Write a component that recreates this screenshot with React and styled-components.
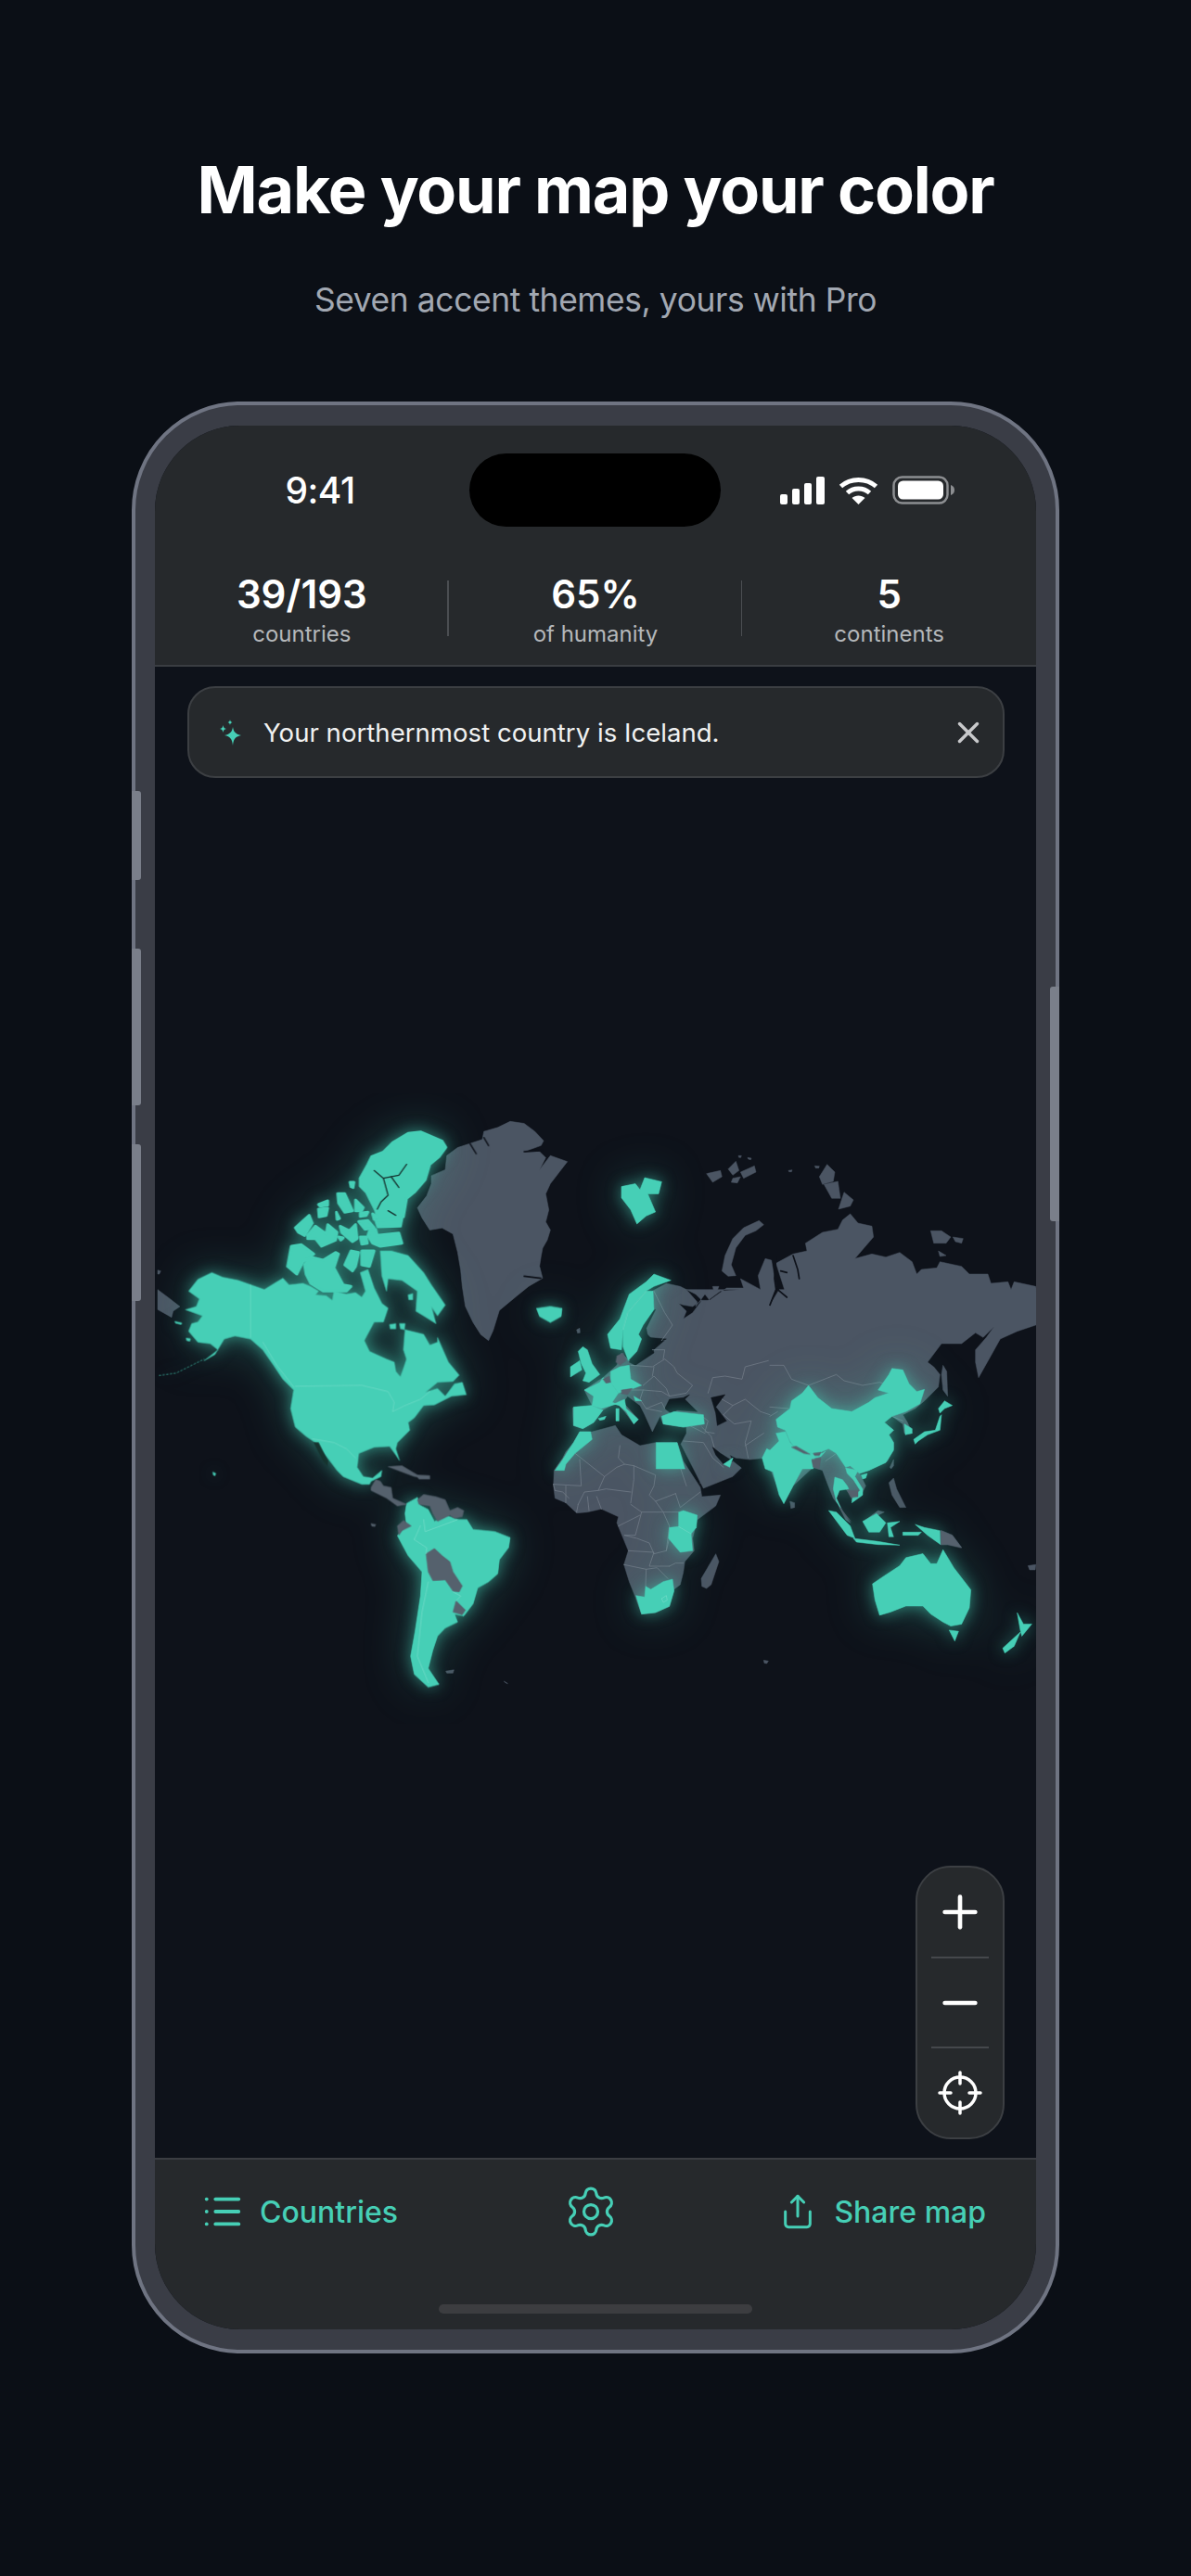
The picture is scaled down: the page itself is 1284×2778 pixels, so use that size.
import React from "react";
import styled, { createGlobalStyle } from "styled-components";
import { List, Settings, Share, Plus, Minus, X } from "lucide-react";

const TEAL = "#46cfb6";
const LAND = "#4b5563";
const WATER = "#0e121a";
const FJORD = "#16332f";
const BORDER = "#717a87";

const GlobalStyle = createGlobalStyle`
  html, body { margin: 0; padding: 0; background: #0b0f16; }
  body { font-family: "Inter", "Liberation Sans", sans-serif; }
`;

const Page = styled.div`
  width: 1284px;
  height: 2778px;
  overflow: hidden;
  background: #0b0f16;
  padding-top: 163px;
  box-sizing: border-box;
  display: flex;
  flex-direction: column;
  align-items: center;
`;

const Title = styled.h1`
  margin: 0;
  font-size: 70px;
  line-height: 84px;
  font-weight: 700;
  letter-spacing: -1.2px;
  color: #ffffff;
`;

const Subtitle = styled.p`
  margin: 55px 0 0;
  font-size: 35.4px;
  line-height: 44px;
  font-weight: 400;
  letter-spacing: -0.4px;
  color: #a2a8b2;
`;

const Phone = styled.div`
  position: relative;
  margin-top: 87px;
  width: 1000px;
  height: 2105px;
  box-sizing: border-box;
  padding: 22px 21px;
  background: #3a3d46;
  border: 4px solid #6f7482;
  border-radius: 117px;
  flex-shrink: 0;
`;

const SideButton = styled.div`
  position: absolute;
  top: ${(p) => p.$top}px;
  height: ${(p) => p.$height}px;
  width: 10px;
  background: #7a7f8a;
  ${(p) => (p.$right ? "right: -4px; border-radius: 3px 0 0 3px;" : "left: -4px; border-radius: 0 3px 3px 0;")}
`;

const Screen = styled.div`
  height: 100%;
  border-radius: 92px;
  overflow: hidden;
  background: ${WATER};
  display: flex;
  flex-direction: column;
`;

const Header = styled.header`
  background: #26292c;
  border-bottom: 2px solid #3a3d42;
  flex-shrink: 0;
`;

const StatusBar = styled.div`
  display: grid;
  grid-template-columns: 339px 271px 1fr;
  padding-top: 30px;
`;

const Time = styled.div`
  padding-left: 17px;
  text-align: center;
  font-size: 39px;
  font-weight: 500;
  line-height: 79px;
  letter-spacing: -0.5px;
  color: #fff;
`;

const Island = styled.div`
  height: 79px;
  background: #000;
  border-radius: 40px;
`;

const StatusIcons = styled.div`
  display: flex;
  align-items: center;
  gap: 15px;
  padding-left: 64px;
`;

const Stats = styled.div`
  display: grid;
  grid-template-columns: repeat(3, 1fr);
  margin-top: 58px;
  padding-bottom: 19px;
`;

const Stat = styled.div`
  position: relative;
  display: flex;
  flex-direction: column;
  align-items: center;
  &:not(:last-child)::after {
    content: "";
    position: absolute;
    right: 0;
    top: 0;
    height: 60px;
    width: 1.5px;
    background: #4b4e52;
  }
`;

const StatValue = styled.div`
  font-size: 42px;
  line-height: 30px;
  font-weight: 600;
  color: #fff;
`;

const StatLabel = styled.div`
  margin-top: 14px;
  font-size: 24px;
  line-height: 28px;
  color: #b4b7ba;
`;

const MapArea = styled.main`
  position: relative;
  flex: 1;
  min-height: 0;
  padding-top: 21px;
`;

const Notice = styled.div`
  height: 99px;
  margin: 0 34px 0 35px;
  box-sizing: border-box;
  padding: 0 18px 0 33px;
  display: flex;
  align-items: center;
  gap: 23px;
  background: #26292c;
  border: 2px solid #3c3f43;
  border-radius: 30px;
`;

const NoticeText = styled.span`
  flex: 1;
  font-size: 27.6px;
  color: #f0f1f1;
`;

const WorldMap = styled.svg`
  display: block;
  width: 950px;
  height: 680px;
  margin-top: 340px;
`;

const GlowGroup = styled.g`
  filter: drop-shadow(0 0 8px rgba(70, 207, 182, 0.55)) drop-shadow(0 0 24px rgba(70, 207, 182, 0.28));
`;

const ZoomPanel = styled.div`
  position: absolute;
  right: 34px;
  bottom: 20px;
  width: 96px;
  height: 295px;
  box-sizing: border-box;
  display: flex;
  flex-direction: column;
  background: #26292c;
  border: 2px solid #3c3f43;
  border-radius: 38px;
`;

const ZoomButton = styled.div`
  flex: 1;
  display: flex;
  align-items: center;
  justify-content: center;
  color: #fff;
`;

const ZoomRule = styled.div`
  height: 2px;
  margin: 0 15px;
  background: #45484c;
`;

const BottomBar = styled.footer`
  flex-shrink: 0;
  height: 185px;
  box-sizing: border-box;
  background: #26292c;
  border-top: 2px solid #3a3d42;
  display: flex;
  flex-direction: column;
  align-items: center;
`;

const BarRow = styled.div`
  align-self: stretch;
  height: 112px;
  padding: 0 54px 0 56px;
  display: flex;
  align-items: center;
  justify-content: space-between;
  color: ${TEAL};
`;

const BarItem = styled.div`
  display: flex;
  align-items: center;
  gap: ${(p) => p.$gap}px;
  font-size: 32px;
  font-weight: 500;
`;

const HomeBar = styled.div`
  margin-top: 44px;
  width: 338px;
  height: 10px;
  border-radius: 5px;
  background: #3c3d40;
`;

/* Map outlines. Each block below is traced from one crop of the design, so the
   numbers are crop pixels; Crop puts them back on the map. */

// origin 170,1360 - north america mainland
const naTeal = [
  "100,100 130,62 175,40 210,55 260,65 302,80 345,95 385,70 405,58 425,80 470,75 495,85 520,100 510,112 545,115 565,130 570,100 610,110 640,105 660,120 672,100 655,40 680,30 700,90 725,140 745,155 730,200 700,200 668,260 685,295 740,320 765,330 770,360 785,378 795,350 805,320 795,290 800,225 860,240 880,275 905,265 905,250 940,330 975,372 955,392 905,395 865,428 905,415 930,440 960,400 985,395 998,435 950,440 895,468 860,470 830,510 810,525 815,550 775,590 770,610 782,648 770,630 750,602 700,605 650,625 645,670 665,700 695,705 725,680 722,700 690,715 685,725 660,725 600,700 580,680 550,640 510,590 480,570 445,540 430,480 440,420 405,385 375,340 340,290 300,255 250,245 215,255 185,305 150,325 195,290 170,270 130,265 100,230 110,205 130,200 145,180 90,160 125,150 135,125",
  "720,-30 755,-30 810,-15 860,40 885,80 930,145 905,180 885,150 900,205 860,180 835,165 840,100 790,65 745,60 740,100 725,50",
  "92,252 106,254 104,262 94,260",
  "55,198 78,203 76,208 58,204",
  "750,208 770,205 770,222 752,222",
  "782,205 800,205 798,225 785,222",
  "810,112 825,108 825,128 812,128",
  "178,685 188,690 185,698 180,695",
];
const naGray = [
  "0,95 40,125 72,150 50,165 45,185 0,160",
  "0,32 10,35 5,45 0,45",
];
const naGrayOver = [
  "690,735 705,710 720,715 730,730 755,735 760,770 805,790 775,795 740,770 690,745",
  "745,668 790,665 840,695 870,705 830,700 790,685",
  "835,695 880,697 880,708 845,708",
  "840,775 860,758 900,765 930,775 945,810 970,800 990,810 985,830 960,835 945,825 905,845 890,820 880,795 845,790",
  "775,860 795,842 820,860 790,875 780,890",
  "690,852 705,855 702,862 692,860",
];
const naDark = ["505,590 520,590 550,650 548,665 535,650"];
const naTealLines = [
  "300,80 300,250",
  "445,408 660,405 745,425 765,460 760,490 800,470 850,450 880,425",
  "500,578 570,590 610,610 640,640",
  "340,265 385,340 440,410",
];
const naThin = ["5,373 60,365 110,340 150,320"];

// origin 290,1210 - canadian arctic
const arcticTeal = [
  "295,185 320,140 332,115 370,100 400,70 450,40 490,35 560,65 572,85 550,115 520,140 505,190 470,230 445,250 435,310 355,320 345,290 315,230 295,210",
  "345,322 430,315 425,340 352,342",
  "325,355 345,350 350,370 420,362 430,395 360,405 335,395 320,370",
  "290,325 320,322 340,345 310,350",
  "222,235 245,235 270,290 245,295 225,265",
  "280,255 305,280 300,290 280,290",
  "295,298 320,295 315,305 295,308",
  "335,300 350,310 340,318",
  "262,198 275,198 272,215 265,212",
  "160,270 190,258 190,272 165,275",
  "160,285 190,282 185,305 162,310",
  "218,295 228,315 220,318",
  "85,345 130,305 140,330 115,370 95,360",
  "125,370 150,340 185,365 190,335 220,360 215,385 170,405 150,380 125,380",
  "230,340 260,355 280,335 285,380 270,390 235,360",
  "295,375 315,375 318,395 300,398",
  "225,375 240,378 232,385",
  "60,470 72,405 105,400 145,430 110,455 90,495",
  "115,465 135,440 175,450 215,425 225,430 210,475 240,530 265,535 250,550 175,550 135,525 120,495",
  "245,465 265,420 290,425 280,470 270,485",
  "300,420 340,420 325,470 300,465",
];
const arcticFjords = [
  "340,160 370,185 420,175 445,140",
  "395,180 420,215",
  "370,185 385,240 362,262 350,285",
  "385,290 410,305",
];

// origin 590,1360 - europe and the near east, eurasia outline starts here
const eurasia =
  "120,420 180,380 225,340 240,300 260,320 285,340 340,295 380,260 345,260 320,235 300,215 345,165 340,100 385,75 430,85 480,110 500,130 470,150 440,145 425,140 450,165 440,190 470,170 500,130 520,130 560,100 620,95 " +
  // north coast of russia
  "450,95 485,135 480,150 510,110 525,130 580,90 635,90 625,60 690,95 682,50 705,-5 725,0 735,60 740,90 720,145 750,95 772,95 775,120 740,10 795,-20 840,-30 835,-55 890,-90 940,-100 955,-130 980,-150 1005,-120 1050,-110 1055,-75 995,-5 1050,-20 1095,-10 1140,-25 1180,5 1195,45 1210,30 1260,25 1270,5 1340,20 1365,45 1425,45 1435,75 1490,70 1500,95 1510,70 1580,85 1600,210 " +
  // pacific side, okhotsk, china coast down to india
  "1580,210 1520,230 1465,255 1440,300 1395,380 1385,330 1385,290 1420,250 1445,215 1410,250 1385,235 1340,270 1275,270 1230,330 1250,345 1270,370 1265,410 1220,455 1190,480 1150,500 1165,525 1180,560 1155,560 1150,530 1115,505 1090,525 1120,550 1105,565 1120,590 1120,610 1100,650 1040,680 1010,690 1030,730 1015,760 985,780 985,765 965,740 945,740 935,770 955,810 980,850 965,840 940,790 925,770 905,720 890,680 860,670 795,730 765,785 735,710 720,670 705,640 655,645 610,640 590,630 600,650 628,672 600,700 505,738 432,595 450,560 450,540 440,540 375,530 365,505 340,555 315,500 300,470 260,440 245,460 290,510 280,530 250,490 225,460 180,485 150,525 115,545 85,535 82,478 145,470";
const eurGray = [
  eurasia,
  "95,225 105,220 106,235 98,236",
];
const eurSeas = [
  "290,250 330,165 350,160 320,220 325,250 385,255 340,275 345,300 285,340 265,330 305,280",
  "380,480 395,450 440,445 460,435 445,450 485,490 420,485 400,495",
  "530,445 575,435 545,475 580,520 550,535 545,495",
  "535,605 560,625 600,650 570,660 545,630",
];
const eurTeal = [
  "195,240 235,190 265,110 320,70 345,45 400,65 345,85 320,100 260,170 245,225 240,290 205,285",
  "245,225 260,170 320,100 342,100 345,160 310,210 295,240 305,255 290,295 262,325 245,280",
  "100,295 115,280 130,290 145,335 170,370 135,395 115,390 125,365 110,335",
  "75,345 105,325 112,355 75,378",
  "120,420 170,395 180,380 205,395 230,430 210,460 225,465 175,480 145,470 150,440",
  "205,360 235,345 265,340 270,385 305,405 265,420 230,430 205,395",
  "215,465 250,450 255,480 295,515 280,530 255,490 232,470",
  "222,480 232,480 232,520 222,520",
  "280,440 305,455 285,455",
  "165,512 190,505 185,515 170,518",
  "85,475 145,470 180,485 150,525 115,545 85,535",
  "25,680 50,645 65,620 85,590 105,555 140,555 145,580 90,625 60,660 55,680",
  "370,505 410,490 505,500 508,530 440,540 375,530",
  "352,590 420,590 445,675 352,675",
  "570,660 600,640 590,670",
];
const eurGrayOver = [
  "225,310 245,300 255,325 235,340 222,330",
  "180,385 200,375 205,395 190,398",
  "240,420 275,415 260,435 240,432",
];
const eurLines = [
  "270,340 340,345 380,320 410,345 420,365 470,405 450,430 395,440 385,415 345,375 310,405",
  "345,345 340,375",
  "395,440 370,425 310,420 265,420",
  "310,420 300,450 320,480 370,490",
  "320,480 370,460 380,480",
  "345,100 380,170 405,210 370,260",
  "340,290 380,290 375,320",
  "520,430 535,380 575,375 630,385 640,345 715,325",
  "495,500 520,520 510,555 540,560",
  "600,470 640,450 690,490 720,500",
  "570,500 605,530 660,520 640,590 650,640",
  "500,540 530,570 540,605",
  "640,600 700,560",
  "450,530 510,560",
  "440,585 505,590 535,640 570,670",
  "565,450 600,470 570,500",
];
const eurTealLines = ["245,225 260,170 320,100"];

// origin 590,1560 - africa
const africaGray = [
  "22,80 50,40 60,20 85,-10 105,-45 145,-45 220,-65 240,-35 300,0 350,-10 420,-10 440,50 495,135 500,165 560,160 545,195 485,240 470,300 475,340 445,375 440,410 430,450 410,465 395,520 350,540 305,545 285,490 265,440 248,385 262,340 225,250 230,230 175,205 130,215 95,218 60,185 25,170 20,130",
  "498,430 545,350 555,375 530,450 515,462 500,455",
];
const africaTeal = [
  "425,215 440,210 485,225 482,265 465,285 425,262",
  "395,265 425,262 465,285 470,340 430,345 392,300",
  "287,485 315,490 318,455 335,465 375,440 405,432 410,470 395,520 350,540 305,545",
];
const africaLines = [
  "105,45 110,130 20,125",
  "90,25 185,100 225,70 250,60 280,65 350,95 345,130 330,160 350,180 415,155",
  "235,0 230,40 250,60",
  "280,65 280,110 270,185",
  "185,100 165,145 120,150 100,190",
  "165,145 190,140 270,150",
  "350,180 375,215 425,215",
  "415,155 430,200 495,150",
  "270,190 305,215 375,215 395,260 385,340",
  "305,215 285,290 250,290",
  "250,290 290,300 330,315 345,350 385,340 395,300",
  "262,340 345,345 330,390 395,390",
  "248,385 320,400 318,455",
  "320,400 355,395 390,430",
  "395,390 415,380 440,380",
  "230,260 270,240 300,225",
  "60,130 60,185",
  "130,165 135,210",
  "160,165 175,205",
  "100,190 95,215",
  "25,145 50,150 70,170",
  "495,120 570,100 590,75 600,40",
  "430,70 450,130",
  "20,125 25,145",
];
const africaTealLines = ["370,495 385,485 388,500 375,507 370,495", "425,262 465,285"];

// origin 830,1440 - east asia and the islands
const asiaTeal = [
  "20,275 65,240 70,215 105,190 125,165 155,205 200,240 265,250 320,220 340,205 385,190 350,180 385,130 395,110 430,115 450,160 475,185 500,178 485,225 440,250 395,265 370,285 400,310 385,325 400,350 400,375 375,415 320,440 290,450 260,425 245,430 215,385 190,370 165,380 135,385 80,365 65,345 50,310 25,300",
  "-25,400 -10,370 0,375 30,345 20,320 50,315 65,350 80,365 135,385 170,385 180,378 165,395 145,400 140,435 105,435 75,490 45,548 30,520 10,445 -15,435",
  "245,432 285,440 275,460 300,500 300,520 265,545 268,525 292,505 270,470 250,450",
  "210,462 235,470 250,490 255,500 225,505 215,530 228,560 215,540 205,500",
  "295,455 315,450 310,465 300,468",
  "190,570 215,575 260,620 275,660 250,650",
  "270,660 350,670 420,682 350,680 280,672",
  "300,605 345,580 375,610 355,640 320,640",
  "380,610 420,605 390,625 400,655 385,655",
  "470,615 500,625 550,635 552,680 510,650",
  "430,640 490,640 480,650 430,650",
  "465,340 500,315 535,310 550,265 555,260 550,310 510,325 480,345 470,355",
  "545,240 565,215 590,230 565,240 550,255",
  "435,290 460,305 460,320 438,325",
];
const asiaGray = [
  "560,100 572,120 575,200 560,180 555,130",
  "385,480 400,465 410,500 440,560 420,560 395,520",
  "310,600 350,570 370,575 340,590 315,605",
  "388,430 400,405 400,425 392,435",
  "65,540 80,545 80,560 68,563",
  "553,635 590,650 620,690 575,680 553,680",
];
const asiaGrayOver = [
  "70,365 85,362 130,388 110,385",
  "140,385 165,382 160,392 145,392",
  "135,405 165,400 160,435 140,430",
  "250,505 285,505 285,525 262,528",
  "225,560 250,590 262,605 245,590",
  "553,635 590,650 620,690 575,680 553,680",
];
const asiaLines = [
  "0,100 45,100 70,145 125,165 215,130 240,150 300,165 355,155 385,165",
  "0,235 60,240",
  "0,265 25,250",
  "180,410 215,385 260,425",
  "430,280 395,265",
];

// origin 740,1240 - arctic russia
const russiaIslands = [
  "65,80 110,70 115,90 85,108",
  "135,65 160,40 170,70 150,85",
  "175,75 220,55 225,75 185,95",
  "150,95 175,90 165,110 145,108",
  "430,90 455,50 480,75 475,105 440,115",
  "445,115 490,105 498,160 470,160",
  "492,195 510,140 540,165 530,185",
  "115,395 125,345 150,290 185,255 235,232 250,245 225,265 190,280 160,320 145,375 160,410 135,412",
  "790,265 825,265 855,285 840,305 800,305",
  "862,285 895,290 890,305 870,300",
  "815,330 840,345 820,348",
  "85,445 105,445 100,458 88,458",
  "330,70 342,68 340,74 332,74",
  "415,55 430,56 428,62 418,62",
  "168,22 178,22 176,28 170,28",
  "198,28 210,30 208,35 200,33",
];
const russiaRivers = [
  "290,350 285,420 290,455 270,505",
  "325,480 295,455",
  "345,345 360,390 365,420",
  "305,395 325,400",
];

// origin 160,1180, squeezed crop - south america, greenland
const westOld = {
  gray: [
    "870,285 900,255 915,225 915,205 960,190 965,155 1000,135 1040,125 1080,115 1085,95 1130,85 1170,70 1215,75 1250,95 1278,118 1270,130 1215,145 1265,145 1285,160 1265,190 1300,155 1355,170 1330,195 1300,225 1285,250 1295,290 1285,320 1300,340 1290,365 1275,385 1270,405 1265,430 1275,460 1230,480 1190,505 1135,540 1115,590 1100,615 1075,600 1050,570 1025,530 1015,480 1010,440 1000,395 985,350 950,335 910,340 885,310",
    "962,1437 988,1434 985,1442 965,1442",
    "1150,1462 1162,1468 1155,1466",
  ],
  teal: [
    "835,1020 870,1005 880,1025 905,1035 925,1065 965,1050 1000,1060 1030,1060 1050,1085 1120,1090 1170,1105 1165,1130 1135,1160 1130,1195 1100,1215 1065,1230 1050,1270 1020,1300 990,1295 1000,1315 960,1330 935,1350 920,1385 905,1430 940,1470 905,1477 860,1445 848,1400 862,1340 880,1250 885,1190 840,1150 805,1100 835,1075 830,1045",
    "1255,535 1300,530 1338,535 1335,555 1300,570 1265,555",
  ],
  grayOver: [
    "898,1145 925,1132 950,1150 975,1165 985,1190 1015,1225 1005,1240 985,1238 960,1210 920,1212 905,1190",
    "995,1262 1025,1285 1015,1297 985,1290",
  ],
  lines: [
    "880,1075 860,1110 900,1130 898,1145",
    "890,1060 895,1090 1000,1060",
    "905,1215 885,1290 870,1400 905,1465",
    "985,1240 1010,1250 995,1262",
  ],
  fjords: [
    "1215,145 1275,142",
    "1215,455 1270,460",
    "1040,125 1060,150",
    "1085,110 1100,130",
  ],
};

// origin 620,1180, squeezed crop - svalbard, australia, new zealand
const eastOld = {
  teal: [
    "150,232 195,225 210,240 225,210 280,220 270,250 235,250 260,295 230,305 200,325 180,290 150,260",
    "962,1220 1000,1200 1050,1175 1070,1155 1125,1145 1150,1170 1170,1170 1190,1135 1225,1180 1280,1235 1275,1280 1250,1320 1215,1325 1190,1315 1150,1295 1125,1275 1070,1275 1020,1290 985,1298 970,1260",
    "1210,1335 1240,1338 1228,1362",
    "1430,1292 1450,1320 1477,1320 1445,1350 1440,1335",
    "1440,1340 1420,1375 1390,1392 1383,1380",
  ],
  gray: [
    "610,1410 625,1412 620,1418 612,1417",
    "1465,1175 1490,1172 1488,1185 1470,1185",
  ],
};

const Crop = ({ x, y, sx = 1 / 3, sy = 1 / 3, children }) => (
  <g transform={`translate(${x} ${y}) scale(${sx} ${sy})`}>{children}</g>
);

const Shapes = ({ list, fill, grow = 1.5 }) =>
  list.map((points, i) => (
    <polygon key={i} points={points} fill={fill} stroke={fill} strokeWidth={grow} strokeLinejoin="round" />
  ));

const Lines = ({ list, stroke, width, dash }) =>
  list.map((points, i) => (
    <polyline
      key={i}
      points={points}
      fill="none"
      stroke={stroke}
      strokeWidth={width}
      strokeDasharray={dash}
      strokeLinejoin="round"
      strokeLinecap="round"
    />
  ));

const na = { x: 170, y: 1360 };
const arctic = { x: 290, y: 1210 };
const eur = { x: 590, y: 1360 };
const africa = { x: 590, y: 1560 };
const asia = { x: 830, y: 1440 };
const russia = { x: 740, y: 1240 };
const west = { x: 160, y: 1180, sx: 1 / 3, sy: 1 / 2.306 };
const east = { x: 620, y: 1180, sx: 1 / 3, sy: 1 / 2.306 };

const MapArt = () => (
  <WorldMap viewBox="167 1180 950 680" preserveAspectRatio="none">
    <Crop {...west}><Shapes list={westOld.gray} fill={LAND} /></Crop>
    <Crop {...na}><Shapes list={naGray} fill={LAND} /></Crop>
    <Crop {...east}><Shapes list={eastOld.gray} fill={LAND} /></Crop>
    <Crop {...africa}>
      <Shapes list={africaGray} fill={LAND} />
      <Lines list={africaLines} stroke={BORDER} width="2.4" />
    </Crop>
    <Crop {...eur}>
      <Shapes list={eurGray} fill={LAND} />
      <Shapes list={eurSeas} fill={WATER} />
      <Lines list={eurLines} stroke={BORDER} width="2.4" />
    </Crop>
    <Crop {...asia}>
      <Shapes list={asiaGray} fill={LAND} />
      <Lines list={asiaLines} stroke={BORDER} width="2.4" />
    </Crop>
    <Crop {...russia}>
      <Shapes list={russiaIslands} fill={LAND} />
      <Lines list={russiaRivers} stroke={WATER} width="5" />
    </Crop>
    <GlowGroup>
      <Crop {...na}>
        <Shapes list={naTeal} fill={TEAL} />
        <Lines list={naThin} stroke={TEAL} width="2" dash="5 7" />
      </Crop>
      <Crop {...arctic}><Shapes list={arcticTeal} fill={TEAL} grow={9} /></Crop>
      <Crop {...west}><Shapes list={westOld.teal} fill={TEAL} /></Crop>
      <Crop {...east}><Shapes list={eastOld.teal} fill={TEAL} /></Crop>
      <Crop {...eur}><Shapes list={eurTeal} fill={TEAL} /></Crop>
      <Crop {...africa}><Shapes list={africaTeal} fill={TEAL} /></Crop>
      <Crop {...asia}><Shapes list={asiaTeal} fill={TEAL} /></Crop>
    </GlowGroup>
    <Crop {...na}>
      <Shapes list={naDark} fill={FJORD} />
      <Shapes list={naGrayOver} fill="#55616d" />
      <Lines list={naTealLines} stroke="#74dcc9" width="2" />
    </Crop>
    <Crop {...arctic}><Lines list={arcticFjords} stroke={FJORD} width="4" /></Crop>
    <Crop {...west}>
      <Shapes list={westOld.grayOver} fill="#55616d" />
      <Lines list={westOld.lines} stroke="#74dcc9" width="2" />
      <Lines list={westOld.fjords} stroke={WATER} width="4" />
    </Crop>
    <Crop {...eur}>
      <Shapes list={eurGrayOver} fill="#55616d" />
      <Lines list={eurTealLines} stroke="#74dcc9" width="2" />
    </Crop>
    <Crop {...africa}><Lines list={africaTealLines} stroke="#74dcc9" width="2" /></Crop>
    <Crop {...asia}><Shapes list={asiaGrayOver} fill="#55616d" /></Crop>
  </WorldMap>
);

const SignalIcon = () => (
  <svg width="48" height="30" viewBox="0 0 48 30" fill="#fff">
    <rect x="0" y="19" width="8" height="11" rx="2" />
    <rect x="13" y="13" width="8" height="17" rx="2" />
    <rect x="26" y="7" width="8" height="23" rx="2" />
    <rect x="39" y="0" width="9" height="30" rx="2" />
  </svg>
);

const WifiIcon = () => (
  <svg width="43" height="30" viewBox="0 0 43 30" fill="none" stroke="#fff" strokeWidth="5">
    <path d="M2.500 10.500C13 1 30 1 40.500 10.500" />
    <path d="M9.500 17.500C16 11.500 27 11.500 33.500 17.500" />
    <path d="M21.500 30L14.500 23C18 19.500 25 19.500 28.500 23Z" fill="#fff" stroke="none" />
  </svg>
);

const BatteryIcon = () => (
  <svg width="67" height="31" viewBox="0 0 67 31">
    <rect x="1.500" y="1.500" width="58" height="28" rx="9" fill="none" stroke="#8c8e91" strokeWidth="2.500" />
    <rect x="6" y="5.500" width="49" height="20" rx="5.500" fill="#fff" />
    <path d="M63 10c3 1 4 3 4 5.500s-1 4.500-4 5.500z" fill="#8c8e91" />
  </svg>
);

const SparkleIcon = () => (
  <svg width="24" height="28" viewBox="0 0 24 28" fill={TEAL} style={{ flexShrink: 0 }}>
    <path d="M14 8c.8 5 2.500 7.500 9 9-6.500 1.500-8.200 4-9 11-.8-7-2.500-9.500-9-11 6.500-1.500 8.200-4 9-9z" />
    <path d="M11 0c.3 1.800.9 2.500 2.400 3-1.500.5-2.100 1.200-2.400 3-.3-1.800-.9-2.500-2.400-3 1.500-.5 2.100-1.200 2.400-3z" />
    <path d="M3.500 6c.4 2.400 1.100 3.300 3.500 4-2.400.7-3.100 1.600-3.500 4-.4-2.400-1.100-3.300-3.500-4 2.400-.7 3.100-1.600 3.500-4z" />
  </svg>
);

const LocateIcon = () => (
  <svg width="48" height="48" viewBox="0 0 48 48" fill="none" stroke="#fff" strokeWidth="3.500" strokeLinecap="round">
    <circle cx="24" cy="24" r="17" />
    <path d="M24 2v12M24 34v12M2 24h12M34 24h12" />
  </svg>
);

const stats = [
  { value: "39/193", label: "countries" },
  { value: "65%", label: "of humanity" },
  { value: "5", label: "continents" },
];

export default function App() {
  return (
    <Page>
      <GlobalStyle />
      <Title>Make your map your color</Title>
      <Subtitle>Seven accent themes, yours with Pro</Subtitle>
      <Phone>
        <SideButton $top={416} $height={96} />
        <SideButton $top={586} $height={169} />
        <SideButton $top={797} $height={169} />
        <SideButton $right $top={627} $height={253} />
        <Screen>
          <Header>
            <StatusBar>
              <Time>9:41</Time>
              <Island />
              <StatusIcons>
                <SignalIcon />
                <WifiIcon />
                <BatteryIcon />
              </StatusIcons>
            </StatusBar>
            <Stats>
              {stats.map((s) => (
                <Stat key={s.label}>
                  <StatValue>{s.value}</StatValue>
                  <StatLabel>{s.label}</StatLabel>
                </Stat>
              ))}
            </Stats>
          </Header>
          <MapArea>
            <Notice>
              <SparkleIcon />
              <NoticeText>Your northernmost country is Iceland.</NoticeText>
              <X size={38} color="#c8c9cb" strokeWidth={2.2} />
            </Notice>
            <MapArt />
            <ZoomPanel>
              <ZoomButton>
                <Plus size={56} strokeWidth={2} />
              </ZoomButton>
              <ZoomRule />
              <ZoomButton>
                <Minus size={56} strokeWidth={2} />
              </ZoomButton>
              <ZoomRule />
              <ZoomButton>
                <LocateIcon />
              </ZoomButton>
            </ZoomPanel>
          </MapArea>
          <BottomBar>
            <BarRow>
              <BarItem $gap={23}>
                <List size={46} strokeWidth={2} style={{ margin: "0 -6px" }} />
                <span>Countries</span>
              </BarItem>
              <BarItem $gap={0}>
                <Settings size={60} strokeWidth={1.3} style={{ margin: "0 -7px" }} />
              </BarItem>
              <BarItem $gap={24}>
                <Share size={40} strokeWidth={1.8} style={{ margin: "0 -5px" }} />
                <span>Share map</span>
              </BarItem>
            </BarRow>
            <HomeBar />
          </BottomBar>
        </Screen>
      </Phone>
    </Page>
  );
}
